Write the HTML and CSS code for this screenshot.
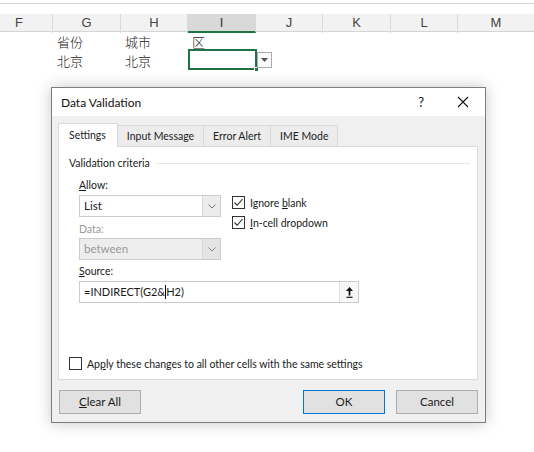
FILE: index.html
```html
<!DOCTYPE html>
<html>
<head>
<meta charset="utf-8">
<link rel="stylesheet" href="styles.css">
</head>
<body>
<div class="sheet">
  <div class="topstrip"></div>
  <div class="colheads">
    <div class="ch cf">F</div>
    <div class="ch">G</div>
    <div class="ch">H</div>
    <div class="ch sel">I</div>
    <div class="ch">J</div>
    <div class="ch">K</div>
    <div class="ch">L</div>
    <div class="ch last">M</div>
  </div>
  <div class="rows">
    <div class="row">
      <div class="cell cf"></div>
      <div class="cell">省份</div>
      <div class="cell">城市</div>
      <div class="cell">区</div>
    </div>
    <div class="row">
      <div class="cell cf"></div>
      <div class="cell">北京</div>
      <div class="cell">北京</div>
      <div class="cell active"><span class="handle"></span><span class="ddbtn"><svg width="7" height="4" viewBox="0 0 7 4"><path d="M0 0h7L3.5 4z" fill="#555"/></svg></span></div>
    </div>
  </div>
</div>

<div class="dialog">
  <div class="titlebar">
    <span class="title">Data Validation</span>
    <span class="help">?</span>
    <svg class="close" width="12" height="12" viewBox="0 0 12 12"><path d="M1 1L11 11M11 1L1 11" stroke="#111" stroke-width="1.1"/></svg>
  </div>
  <div class="body">
    <div class="tabs">
      <div class="tab on">Settings</div>
      <div class="tab">Input Message</div>
      <div class="tab">Error Alert</div>
      <div class="tab">IME Mode</div>
    </div>
    <div class="panel">
      <div class="group"><span>Validation criteria</span><span class="rule"></span></div>
      <div class="criteria">
        <div class="cols">
          <div class="leftcol">
            <div class="lbl"><u>A</u>llow:</div>
            <div class="select"><span class="val">List</span><span class="arrow"><svg width="8" height="5" viewBox="0 0 8 5"><path d="M0.5 0.5L4 4L7.5 0.5" fill="none" stroke="#777" stroke-width="1"/></svg></span></div>
            <div class="lbl dis">Data:</div>
            <div class="select disabled"><span class="val">between</span><span class="arrow"><svg width="8" height="5" viewBox="0 0 8 5"><path d="M0.5 0.5L4 4L7.5 0.5" fill="none" stroke="#888" stroke-width="1"/></svg></span></div>
          </div>
          <div class="rightcol">
            <div class="chk"><span class="box"><svg width="11" height="11" viewBox="0 0 11 11"><path d="M1.5 5.5L4.2 8.3L9.5 2" fill="none" stroke="#222" stroke-width="1.1"/></svg></span><span>Ignore <u>b</u>lank</span></div>
            <div class="chk"><span class="box"><svg width="11" height="11" viewBox="0 0 11 11"><path d="M1.5 5.5L4.2 8.3L9.5 2" fill="none" stroke="#222" stroke-width="1.1"/></svg></span><span><u>I</u>n-cell dropdown</span></div>
          </div>
        </div>
        <div class="lbl src"><u>S</u>ource:</div>
        <div class="input"><span class="val">=INDIRECT(G2&amp;<span class="caret"></span>H2)</span><span class="refbtn"><svg width="7" height="11" viewBox="0 0 7 11"><path d="M3.5 0L7 4H4.4V8.5H2.6V4H0z" fill="#111"/><path d="M0.5 10.3H6.5" stroke="#111" stroke-width="1.2"/></svg></span></div>
      </div>
      <div class="chk apply"><span class="box"></span><span>Ap<u>p</u>ly these changes to all other cells with the same settings</span></div>
    </div>
    <div class="buttons">
      <div class="btn"><u>C</u>lear All</div>
      <div class="spacer"></div>
      <div class="btn ok">OK</div>
      <div class="btn">Cancel</div>
    </div>
  </div>
</div>
</body>
</html>
```

FILE: styles.css
```css
html, body {
  margin: 0;
  padding: 0;
  background: #ffffff;
  width: 534px;
  height: 452px;
  overflow: hidden;
  position: relative;
}

.sheet {
  font-family: "Noto Sans CJK SC", "Noto Sans", sans-serif;
}

.topstrip {
  box-sizing: border-box;
  border-top: 1px solid #d4d4d4;
  margin-top: 3px;
  height: 11px;
}

.colheads {
  display: grid;
  grid-template-columns: 53px 68px 67px 68px 67px 68px 67px 76px;
  height: 18px;
  background: #f2f2f2;
  border-bottom: 1px solid #d4d4d4;
  box-sizing: border-box;
}

.ch {
  font-family: "Liberation Sans", "Noto Sans", sans-serif;
  font-size: 13px;
  color: #444;
  text-align: center;
  line-height: 18px;
  border-right: 1px solid #d9d9d9;
  box-sizing: border-box;
}

.ch.cf {
  text-indent: -14px;
  overflow: hidden;
}

.ch.sel {
  background: #d9d9d9;
  border-bottom: 2px solid #217346;
  line-height: 17px;
  color: #333;
}

.ch.last {
  border-right: none;
}

.rows {
  display: flex;
  flex-direction: column;
}

.row {
  display: grid;
  grid-template-columns: 53px 68px 67px 69px;
  height: 19px;
}

.cell {
  font-size: 13px;
  font-weight: 300;
  line-height: 19px;
  padding-left: 4px;
  color: #222;
  position: relative;
  white-space: nowrap;
}

.cell.active {
  border: 2px solid #217346;
  margin-top: -2px;
  height: 21px;
  box-sizing: border-box;
}

.handle {
  position: absolute;
  right: -4px;
  bottom: -4px;
  width: 5px;
  height: 5px;
  background: #217346;
  border: 1px solid #fff;
  box-sizing: border-box;
}

.ddbtn {
  position: absolute;
  left: 67px;
  top: 1px;
  width: 15px;
  height: 16px;
  box-sizing: border-box;
  border: 1px solid #aaaaaa;
  background: #fbfbfb;
  display: flex;
  align-items: center;
  justify-content: center;
}

/* Dialog */
.dialog {
  position: absolute;
  left: 51px;
  top: 87px;
  width: 435px;
  height: 336px;
  box-sizing: border-box;
  border: 1px solid #7d7d7d;
  background: #f0f0f0;
  box-shadow: 0 0 14px rgba(0, 0, 0, 0.22);
  font-family: Lato, "Noto Sans", sans-serif;
  font-size: 10.5px;
  color: #1a1a1a;
  display: flex;
  flex-direction: column;
}

.titlebar {
  height: 28px;
  background: #ffffff;
  display: flex;
  align-items: center;
  padding-left: 9px;
  flex: none;
}

.title {
  font-size: 12px;
  flex: 1;
  color: #111;
}

.help {
  font-size: 13px;
  margin-right: 33px;
  color: #111;
}

.close {
  margin-right: 16px;
}

.body {
  flex: 1;
  display: flex;
  flex-direction: column;
  padding: 7px 7px 0 6px;
}

.tabs {
  display: flex;
  align-items: flex-end;
  height: 23px;
  flex: none;
}

.tab {
  height: 21px;
  line-height: 20px;
  box-sizing: border-box;
  padding: 0 9px;
  background: #ececec;
  border: 1px solid #dadada;
  border-bottom: none;
  border-left: none;
  color: #222;
}

.tab.on {
  height: 24px;
  line-height: 23px;
  background: #ffffff;
  border: 1px solid #dadada;
  border-bottom: none;
  padding: 0 11px 0 10px;
  position: relative;
  z-index: 1;
  margin-bottom: -1px;
}

.panel {
  height: 234px;
  background: #ffffff;
  border: 1px solid #dadada;
  box-sizing: border-box;
  display: flex;
  flex-direction: column;
  padding: 8px 7px 9px 10px;
  flex: none;
}

.group {
  display: flex;
  align-items: center;
  height: 16px;
}

.rule {
  flex: 1;
  height: 1px;
  background: #e6e6e6;
  margin-left: 6px;
}

.criteria {
  padding-left: 10px;
  margin-top: 6px;
}

.cols {
  display: flex;
}

.leftcol {
  width: 142px;
  display: flex;
  flex-direction: column;
}

.lbl {
  height: 16px;
  line-height: 16px;
}

.lbl.dis {
  color: #9a9a9a;
  margin-top: 4px;
}

.lbl.src {
  margin-top: 3px;
}

.select {
  margin-top: 2px;
  height: 22px;
  box-sizing: border-box;
  border: 1px solid #cccccc;
  background: #ffffff;
  display: flex;
  align-items: stretch;
}

.select .val {
  flex: 1;
  line-height: 20px;
  padding-left: 4px;
  font-size: 11.5px;
}

.select .arrow {
  width: 17px;
  border-left: 1px solid #d9d9d9;
  background: #ececec;
  display: flex;
  align-items: center;
  justify-content: center;
}

.select.disabled {
  margin-top: 1px;
  background: #ededed;
  color: #9a9a9a;
}

.select.disabled .arrow {
  background: #e4e4e4;
}

.rightcol {
  margin-left: 11px;
  padding-top: 19px;
  display: flex;
  flex-direction: column;
  gap: 7px;
}

.chk {
  display: flex;
  align-items: center;
  gap: 5px;
  height: 13px;
}

.box {
  width: 13px;
  height: 13px;
  box-sizing: border-box;
  border: 1px solid #333333;
  background: #ffffff;
  display: flex;
  align-items: center;
  justify-content: center;
  flex: none;
}

.input {
  margin-top: 2px;
  width: 280px;
  height: 22px;
  box-sizing: border-box;
  border: 1px solid #cccccc;
  display: flex;
  align-items: stretch;
}

.input .val {
  flex: 1;
  line-height: 20px;
  padding-left: 4px;
  font-size: 11px;
}

.caret {
  display: inline-block;
  width: 1px;
  height: 14px;
  background: #000;
  vertical-align: -3px;
}

.refbtn {
  width: 18px;
  border-left: 1px solid #e0e0e0;
  background: #f7f7f7;
  display: flex;
  align-items: center;
  justify-content: center;
}

.chk.apply {
  margin-top: auto;
}

.buttons {
  display: flex;
  margin-top: 10px;
  gap: 11px;
}

.spacer {
  flex: 1;
}

.btn {
  width: 82px;
  height: 24px;
  box-sizing: border-box;
  border: 1px solid #adadad;
  background: #e1e1e1;
  text-align: center;
  line-height: 22px;
  font-size: 11.5px;
  color: #1a1a1a;
}

.btn:first-child {
  margin-left: 1px;
}

.btn.ok {
  border-color: #0078d7;
}

u {
  text-decoration: underline;
  text-underline-offset: 1px;
}
```
